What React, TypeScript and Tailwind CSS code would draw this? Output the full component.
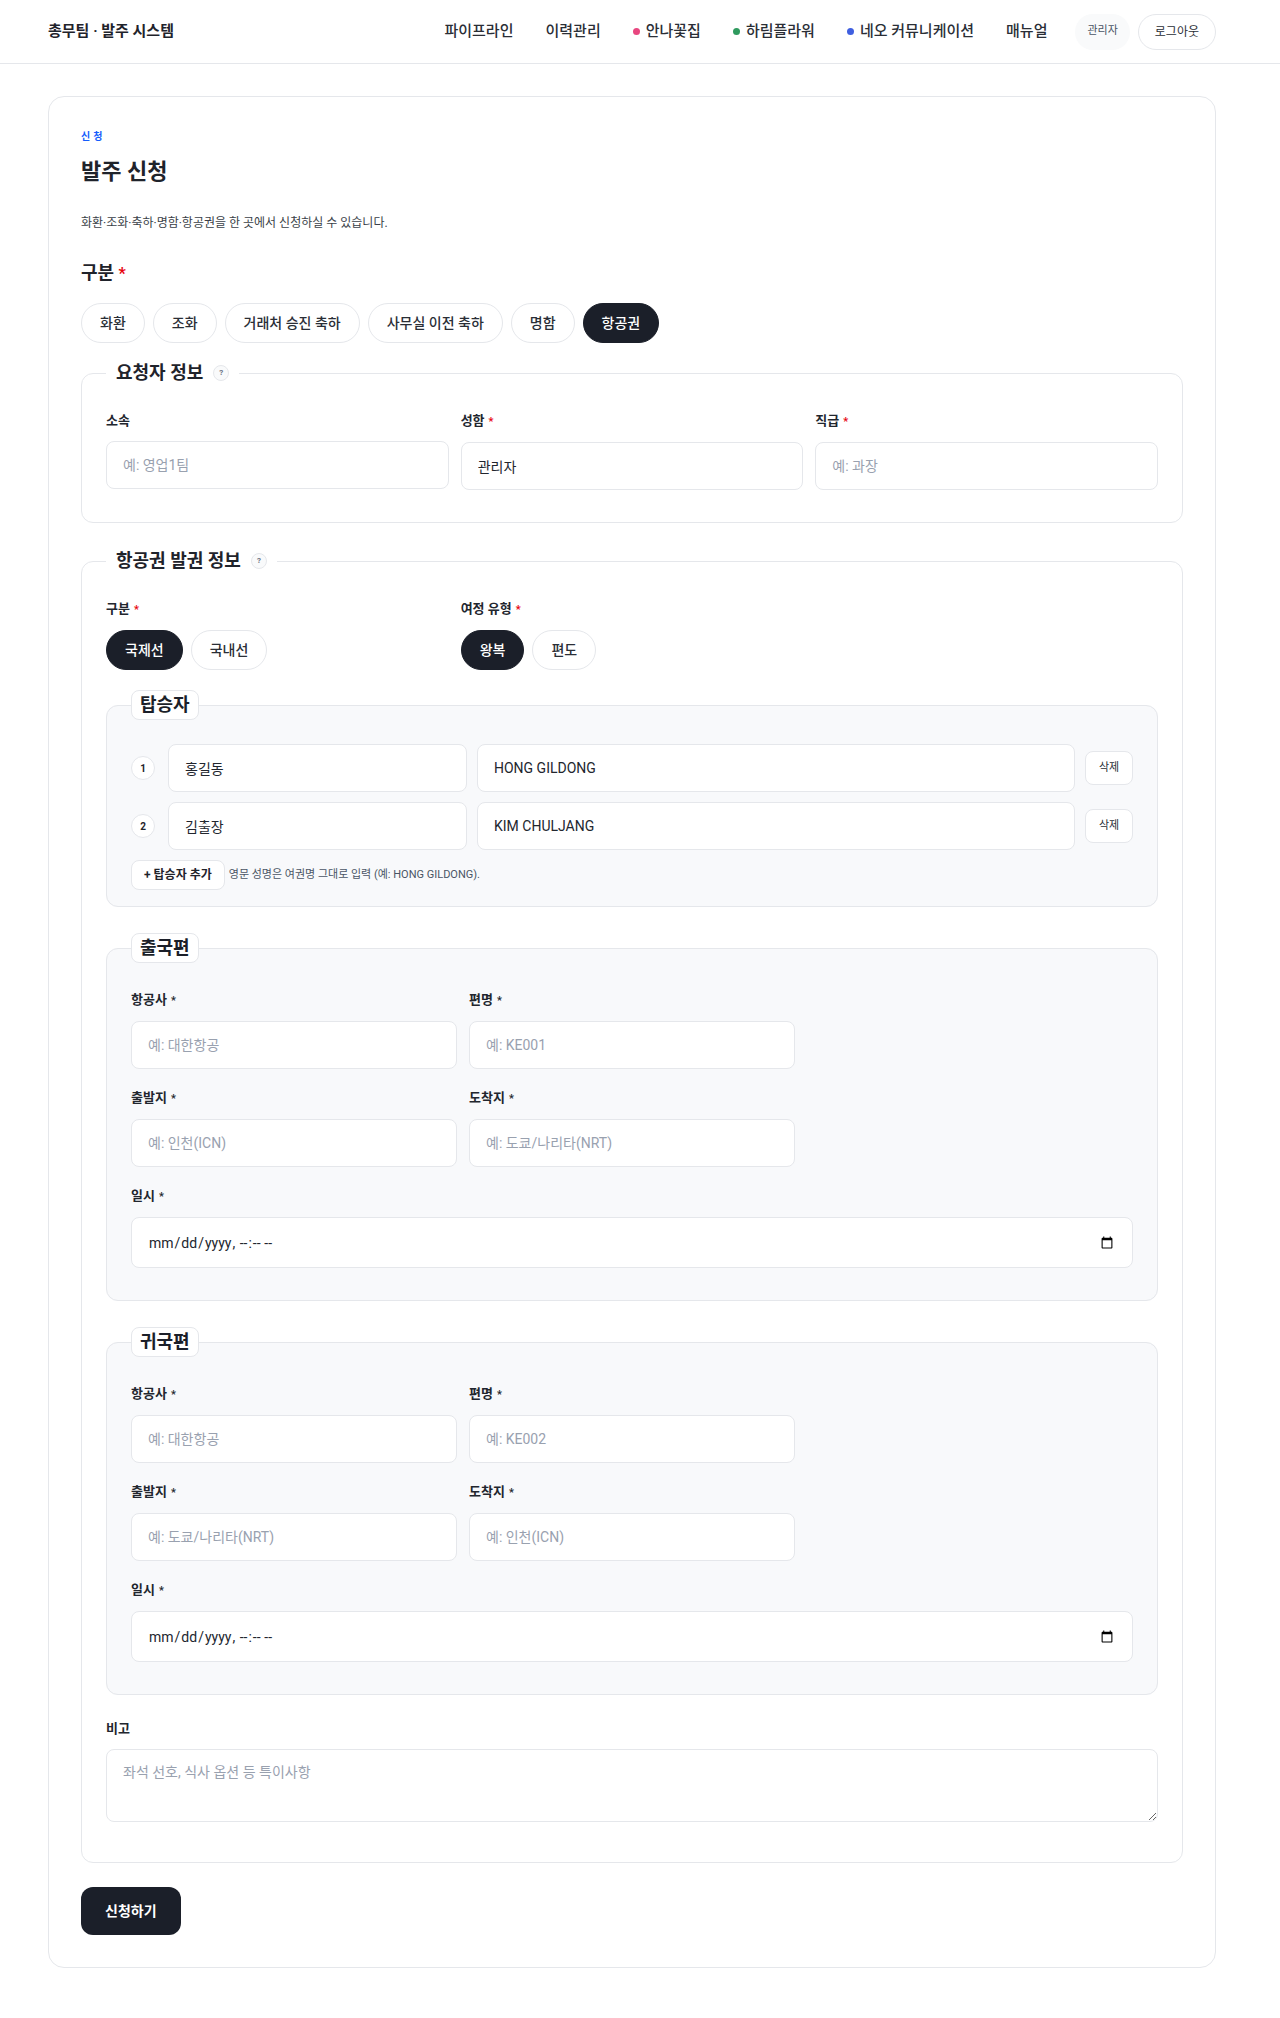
import { useState } from 'react';

type Passenger = { id: number; ko: string; en: string };

const NAV_LINKS = [
  { label: '파이프라인' },
  { label: '이력관리' },
  { label: '안나꽃집', dot: 'bg-[#e8467f]' },
  { label: '하림플라워', dot: 'bg-[#2f9a5e]' },
  { label: '네오 커뮤니케이션', dot: 'bg-[#3f5fe0]' },
  { label: '매뉴얼' },
];

const CATEGORIES = ['화환', '조화', '거래처 승진 축하', '사무실 이전 축하', '명함', '항공권'];

function Chip({ label, active, onClick }: { label: string; active?: boolean; onClick?: () => void }) {
  return (
    <button
      type="button"
      onClick={onClick}
      className={`h-10 px-[18px] rounded-full border text-sm leading-5 font-medium ${
        active ? 'bg-[#1b1f29] border-[#1b1f29] text-white' : 'bg-white border-gray-200 text-[#2a2e36]'
      }`}
    >
      {label}
    </button>
  );
}

function Help() {
  return (
    <span className="inline-flex w-4 h-4 items-center justify-center rounded-full border border-gray-200 bg-gray-50 text-[8px] font-bold text-gray-500">
      ?
    </span>
  );
}

function Label({ text, required, plainStar }: { text: string; required?: boolean; plainStar?: boolean }) {
  return (
    <label className="block text-[13px] leading-5 font-semibold text-[#22262e] mb-2.5">
      {text}
      {required && <span className={`ml-1 text-[11px] ${plainStar ? 'text-[#22262e]' : 'text-red-600'}`}>*</span>}
    </label>
  );
}

function TextInput({ placeholder, value }: { placeholder?: string; value?: string }) {
  return (
    <input
      type="text"
      placeholder={placeholder}
      defaultValue={value}
      className="w-full h-12 px-4 rounded-lg border border-gray-200 bg-white text-sm text-[#22262e] placeholder:text-gray-400 outline-none"
    />
  );
}

// 탑승자 / 출국편 / 귀국편 묶음
function SubBox({ title, className = '', children }: { title: string; className?: string; children: React.ReactNode }) {
  return (
    <fieldset className={`rounded-xl border border-gray-200 bg-[#f8f9fb] px-6 ${className}`}>
      <legend className="px-2 rounded-lg border border-gray-200 bg-white text-lg leading-7 font-bold text-[#1b1f29]">
        {title}
      </legend>
      {children}
    </fieldset>
  );
}

function FlightBox({ title, flight, from, to }: { title: string; flight: string; from: string; to: string }) {
  return (
    <SubBox title={title} className="mt-[26px] pt-[27px] pb-8">
      <div className="grid grid-cols-3 gap-x-3 gap-y-[19px]">
        <div>
          <Label text="항공사" required plainStar />
          <TextInput placeholder="예: 대한항공" />
        </div>
        <div>
          <Label text="편명" required plainStar />
          <TextInput placeholder={flight} />
        </div>
        <div />
        <div>
          <Label text="출발지" required plainStar />
          <TextInput placeholder={from} />
        </div>
        <div>
          <Label text="도착지" required plainStar />
          <TextInput placeholder={to} />
        </div>
        <div />
        <div className="col-span-3">
          <Label text="일시" required plainStar />
          <input
            type="datetime-local"
            className="w-full h-[51px] px-4 rounded-lg border border-gray-200 bg-white text-sm text-[#22262e] outline-none"
          />
        </div>
      </div>
    </SubBox>
  );
}

export default function App() {
  const [category, setCategory] = useState('항공권');
  const [route, setRoute] = useState('국제선');
  const [trip, setTrip] = useState('왕복');
  const [passengers, setPassengers] = useState<Passenger[]>([
    { id: 1, ko: '홍길동', en: 'HONG GILDONG' },
    { id: 2, ko: '김출장', en: 'KIM CHULJANG' },
  ]);

  function addPassenger() {
    setPassengers((p) => [...p, { id: Date.now(), ko: '', en: '' }]);
  }

  function removePassenger(id: number) {
    setPassengers((p) => p.filter((x) => x.id !== id));
  }

  return (
    <div className="min-h-screen bg-white text-[#1f232b] font-['Roboto','Noto_Sans_CJK_KR',sans-serif]">
      {/* 상단 메뉴 */}
      <header className="h-16 border-b border-gray-200 pl-12 pr-16 flex items-center justify-between">
        <div className="text-[15px] font-semibold">총무팀 · 발주 시스템</div>
        <div className="flex items-center">
          <nav className="flex items-center gap-8">
            {NAV_LINKS.map((l) => (
              <a key={l.label} className="flex items-center gap-1.5 text-[15px] font-medium text-[#2a2e36]">
                {l.dot && <span className={`w-[7px] h-[7px] rounded-full ${l.dot}`} />}
                {l.label}
              </a>
            ))}
          </nav>
          <span className="ml-7 h-9 px-3 flex items-center rounded-full bg-gray-50 text-[11px] text-gray-600">관리자</span>
          <button className="ml-2 h-9 px-4 rounded-full border border-gray-200 text-xs text-[#2a2e36]">로그아웃</button>
        </div>
      </header>

      <main className="pl-12 pr-16 pt-8 pb-12">
        <div className="rounded-2xl border border-gray-200 p-8">
          <p className="text-[10px] leading-4 tracking-[0.3em] font-semibold text-blue-600">신청</p>
          <h1 className="mt-3 text-[22px] leading-[30px] font-semibold">발주 신청</h1>
          <p className="mt-7 text-xs leading-4 text-[#3a3f48]">화환·조화·축하·명함·항공권을 한 곳에서 신청하실 수 있습니다.</p>

          <h2 className="mt-7 text-lg leading-7 font-bold">
            구분 <span className="text-red-600 text-base">*</span>
          </h2>
          <div className="mt-4 flex flex-wrap gap-2">
            {CATEGORIES.map((c) => (
              <Chip key={c} label={c} active={category === c} onClick={() => setCategory(c)} />
            ))}
          </div>

          {/* 요청자 정보 */}
          <fieldset className="mt-4 rounded-xl border border-gray-200 px-6 pt-6 pb-8">
            <legend className="px-2.5 flex items-center gap-2.5 text-lg leading-7 font-bold">
              요청자 정보 <Help />
            </legend>
            <div className="grid grid-cols-3 gap-3">
              <div>
                <Label text="소속" />
                <TextInput placeholder="예: 영업1팀" />
              </div>
              <div>
                <Label text="성함" required />
                <TextInput value="관리자" />
              </div>
              <div>
                <Label text="직급" required />
                <TextInput placeholder="예: 과장" />
              </div>
            </div>
          </fieldset>

          {/* 항공권 발권 정보 */}
          <fieldset className="mt-6 rounded-xl border border-gray-200 px-6 pt-6 pb-10">
            <legend className="px-2.5 flex items-center gap-2.5 text-lg leading-7 font-bold">
              항공권 발권 정보 <Help />
            </legend>
            <div className="grid grid-cols-3 gap-3">
              <div>
                <Label text="구분" required />
                <div className="flex gap-2">
                  {['국제선', '국내선'].map((r) => (
                    <Chip key={r} label={r} active={route === r} onClick={() => setRoute(r)} />
                  ))}
                </div>
              </div>
              <div>
                <Label text="여정 유형" required />
                <div className="flex gap-2">
                  {['왕복', '편도'].map((t) => (
                    <Chip key={t} label={t} active={trip === t} onClick={() => setTrip(t)} />
                  ))}
                </div>
              </div>
            </div>

            <SubBox title="탑승자" className="mt-5 pt-6 pb-4">
              <div className="flex flex-col gap-2.5">
                {passengers.map((p, i) => (
                  <div key={p.id} className="grid grid-cols-[27px_1fr_2fr_48px] gap-2.5 items-center">
                    <span className="w-6 h-6 rounded-full border border-gray-200 bg-white flex items-center justify-center text-[10px] font-bold">
                      {i + 1}
                    </span>
                    <TextInput placeholder="한글 성명" value={p.ko} />
                    <TextInput placeholder="영문 성명" value={p.en} />
                    <button
                      type="button"
                      onClick={() => removePassenger(p.id)}
                      className="h-[34px] rounded-lg border border-gray-200 bg-white text-[11px] text-[#2a2e36]"
                    >
                      삭제
                    </button>
                  </div>
                ))}
                <div className="flex items-center gap-1">
                  <button
                    type="button"
                    onClick={addPassenger}
                    className="h-[30px] px-3 rounded-lg border border-gray-200 bg-white text-xs font-semibold"
                  >
                    + 탑승자 추가
                  </button>
                  <span className="text-[11px] text-gray-600">영문 성명은 여권명 그대로 입력 (예: HONG GILDONG).</span>
                </div>
              </div>
            </SubBox>

            <FlightBox title="출국편" flight="예: KE001" from="예: 인천(ICN)" to="예: 도쿄/나리타(NRT)" />
            <FlightBox title="귀국편" flight="예: KE002" from="예: 도쿄/나리타(NRT)" to="예: 인천(ICN)" />

            <div className="mt-6">
              <Label text="비고" />
              <textarea
                placeholder="좌석 선호, 식사 옵션 등 특이사항"
                className="block w-full h-[73px] px-4 py-3 rounded-lg border border-gray-200 bg-white text-sm placeholder:text-gray-400 outline-none"
              />
            </div>
          </fieldset>

          <button type="button" className="mt-6 h-12 px-6 rounded-xl bg-[#1b1f29] text-white text-sm font-semibold">
            신청하기
          </button>
        </div>
      </main>
    </div>
  );
}
